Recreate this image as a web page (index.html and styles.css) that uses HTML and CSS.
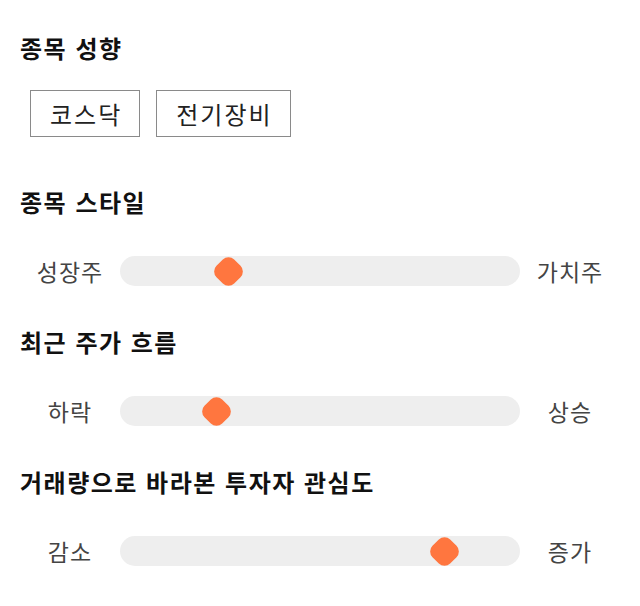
FILE: index.html
```html
<!DOCTYPE html>
<html lang="ko">
<head>
<meta charset="utf-8">
<link rel="stylesheet" href="styles.css">
</head>
<body>
<main class="page">
  <section class="section section-tags">
    <h2 class="title">종목 성향</h2>
    <div class="tags">
      <span class="tag">코스닥</span>
      <span class="tag">전기장비</span>
    </div>
  </section>
  <section class="section">
    <h2 class="title">종목 스타일</h2>
    <div class="slider-row">
      <span class="label">성장주</span>
      <div class="track"><span class="thumb" style="left: 27.2%"></span></div>
      <span class="label">가치주</span>
    </div>
  </section>
  <section class="section">
    <h2 class="title">최근 주가 흐름</h2>
    <div class="slider-row">
      <span class="label">하락</span>
      <div class="track"><span class="thumb" style="left: 24.2%"></span></div>
      <span class="label">상승</span>
    </div>
  </section>
  <section class="section">
    <h2 class="title">거래량으로 바라본 투자자 관심도</h2>
    <div class="slider-row">
      <span class="label">감소</span>
      <div class="track"><span class="thumb" style="left: 81%"></span></div>
      <span class="label">증가</span>
    </div>
  </section>
</main>
</body>
</html>
```
FILE: styles.css
```css
* { box-sizing: border-box; }
html, body { margin: 0; padding: 0; background: #fff; }
body {
  font-family: "Noto Sans CJK KR", "Noto Sans", sans-serif;
  color: #222;
}
.page {
  padding: 33px 20px 0 20px;
  display: flex;
  flex-direction: column;
}
.section { display: flex; flex-direction: column; }
.section + .section { margin-top: 41px; }
.section-tags + .section { margin-top: 50px; }
.title {
  margin: 0 0 39px 0;
  font-size: 24px;
  line-height: 30px;
  font-weight: 700;
  letter-spacing: 1.5px;
  color: #111;
}
.section-tags .title { margin-bottom: 27px; }
.tags {
  display: flex;
  gap: 16px;
  padding-left: 10px;
}
.tag {
  height: 47px;
  padding: 0 17px 0 19px;
  border: 1px solid #8a8a8a;
  display: flex;
  align-items: center;
  font-size: 24px;
  letter-spacing: 2px;
  color: #222;
}
.slider-row {
  display: grid;
  grid-template-columns: 100px 400px 100px;
  align-items: center;
  height: 30px;
}
.label {
  text-align: center;
  font-size: 23px;
  letter-spacing: 1px;
  color: #444;
  line-height: 30px;
}
.track {
  position: relative;
  height: 30px;
  background: #eeeeee;
  border-radius: 15px;
}
.thumb {
  position: absolute;
  top: 50%;
  width: 25px;
  height: 25px;
  margin: -12.5px 0 0 -12.5px;
  background: #ff763f;
  border-radius: 8px;
  transform: rotate(45deg);
}
```
